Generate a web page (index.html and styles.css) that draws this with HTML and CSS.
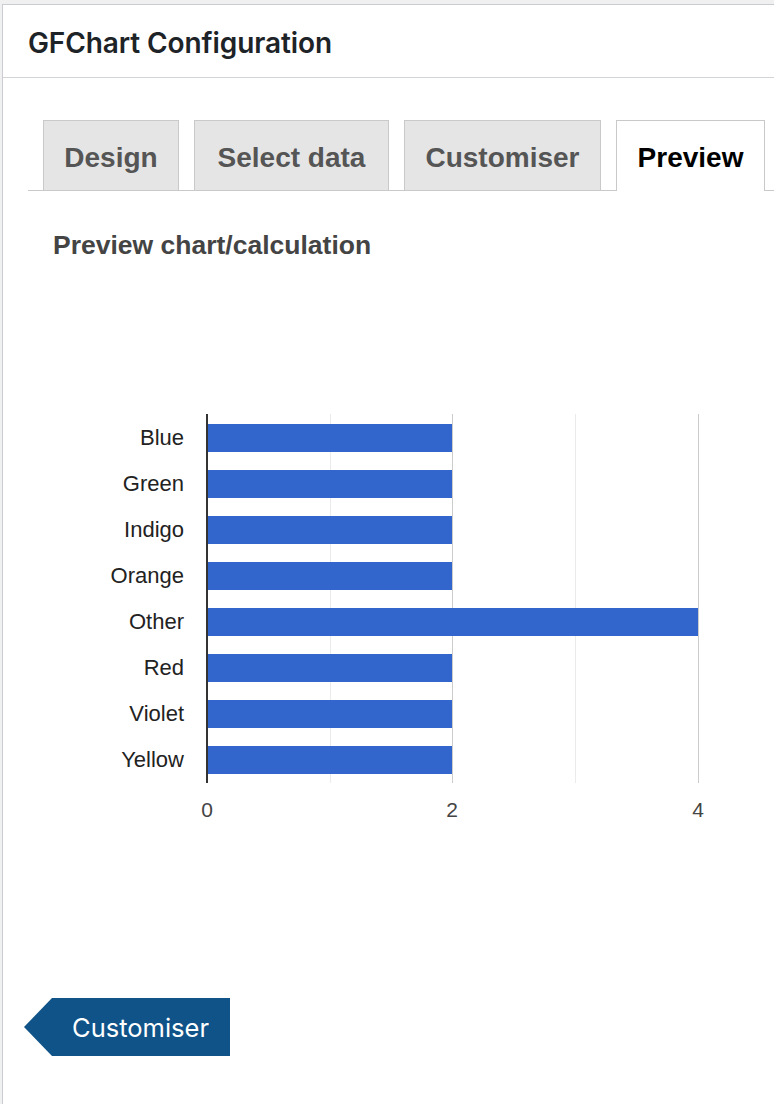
FILE: index.html
```html
<!DOCTYPE html>
<html lang="en">
<head>
<meta charset="utf-8">
<title>GFChart Configuration</title>
<link rel="stylesheet" href="styles.css">
</head>
<body>
<div class="panel">
  <div class="panel-header">
    <h2 class="panel-title">GFChart Configuration</h2>
  </div>
  <div class="panel-body">
    <nav class="tabs">
      <a class="tab">Design</a>
      <a class="tab">Select data</a>
      <a class="tab">Customiser</a>
      <a class="tab tab-active">Preview</a>
    </nav>
    <h3 class="section-title">Preview chart/calculation</h3>

    <div class="chart">
      <div class="chart-row">
        <div class="labels">
          <div class="label">Blue</div>
          <div class="label">Green</div>
          <div class="label">Indigo</div>
          <div class="label">Orange</div>
          <div class="label">Other</div>
          <div class="label">Red</div>
          <div class="label">Violet</div>
          <div class="label">Yellow</div>
        </div>
        <div class="plot">
          <div class="grid grid-minor" style="left:122px"></div>
          <div class="grid grid-major" style="left:244px"></div>
          <div class="grid grid-minor" style="left:367px"></div>
          <div class="grid grid-major" style="left:490px"></div>
          <div class="bar-row"><div class="bar" style="width:244px"></div></div>
          <div class="bar-row"><div class="bar" style="width:244px"></div></div>
          <div class="bar-row"><div class="bar" style="width:244px"></div></div>
          <div class="bar-row"><div class="bar" style="width:244px"></div></div>
          <div class="bar-row"><div class="bar" style="width:490px"></div></div>
          <div class="bar-row"><div class="bar" style="width:244px"></div></div>
          <div class="bar-row"><div class="bar" style="width:244px"></div></div>
          <div class="bar-row"><div class="bar" style="width:244px"></div></div>
        </div>
      </div>
      <div class="ticks">
        <span class="tick">0</span>
        <span class="tick">2</span>
        <span class="tick">4</span>
      </div>
    </div>

    <div class="actions">
      <button class="btn-back">Customiser</button>
    </div>
  </div>
</div>
</body>
</html>
```

FILE: styles.css
```css
html, body {
  margin: 0;
  padding: 0;
}
body {
  background: #f0f0f1;
  padding: 4px 0 0 2px;
  height: 1100px;
  overflow: hidden;
}
.panel {
  background: #fff;
  border-top: 1px solid #c9cdd1;
  border-left: 1px solid #c9cdd1;
  height: 1099px;
}
.panel-header {
  height: 72px;
  border-bottom: 1px solid #d2d5d8;
  display: flex;
  align-items: center;
  padding-left: 25px;
}
.panel-title {
  margin: 0;
  font-family: Inter, "Liberation Sans", sans-serif;
  font-weight: 600;
  font-size: 28px;
  color: #1d2327;
  letter-spacing: -0.1px;
  position: relative;
  top: 2px;
}
.panel-body {
  padding: 42px 0 0 25px;
}
.tabs {
  display: flex;
  gap: 15px;
  padding-left: 15px;
  border-bottom: 1px solid #c9c9c9;
  height: 70px;
  align-items: flex-end;
}
.tab {
  box-sizing: border-box;
  height: 70px;
  display: flex;
  align-items: center;
  justify-content: center;
  background: #e5e5e5;
  border: 1px solid #c9c9c9;
  border-bottom: none;
  font-family: "Liberation Sans", Arial, sans-serif;
  font-weight: bold;
  font-size: 28px;
  color: #555;
  padding: 4px 0 0;
}
.tab:nth-child(1) { width: 136px; }
.tab:nth-child(2) { width: 195px; }
.tab:nth-child(3) { width: 197px; }
.tab-active {
  width: 149px;
  background: #fff;
  color: #000;
  height: 71px;
  margin-bottom: -1px;
}
.section-title {
  margin: 38px 0 0 25px;
  font-family: "Liberation Sans", Arial, sans-serif;
  font-weight: bold;
  font-size: 26.5px;
  color: #444;
  line-height: 32px;
}
.chart {
  margin-top: 153px;
  font-family: "Liberation Sans", Arial, sans-serif;
}
.chart-row {
  display: flex;
}
.labels {
  width: 178px;
  padding-top: 1px;
}
.label {
  height: 46px;
  display: flex;
  align-items: center;
  justify-content: flex-end;
  font-size: 22px;
  color: #222;
  padding-right: 22px;
}
.plot {
  position: relative;
  width: 494px;
  height: 369px;
  padding-top: 1px;
  box-sizing: border-box;
  border-left: 2px solid #333;
}
.grid {
  position: absolute;
  top: 0;
  bottom: 0;
  width: 1px;
}
.grid-minor { background: #ebebeb; }
.grid-major { background: #cccccc; }
.bar-row {
  height: 46px;
  display: flex;
  align-items: center;
  position: relative;
}
.bar {
  height: 28px;
  background: #3366cc;
}
.ticks {
  position: relative;
  height: 50px;
  margin-left: 178px;
}
.tick {
  position: absolute;
  top: 15px;
  width: 60px;
  margin-left: -30px;
  text-align: center;
  font-size: 21px;
  color: #444;
}
.tick:nth-child(1) { left: 1px; }
.tick:nth-child(2) { left: 246px; }
.tick:nth-child(3) { left: 492px; }
.actions {
  margin-top: 165px;
  margin-left: -4px;
}
.btn-back {
  display: flex;
  align-items: center;
  height: 58px;
  width: 206px;
  border: none;
  background: #0f5388;
  color: #fff;
  font-family: Inter, "Liberation Sans", sans-serif;
  font-size: 25.5px;
  padding: 0 0 0 48px;
  clip-path: polygon(28px 0, 100% 0, 100% 100%, 28px 100%, 0 50%);
  cursor: pointer;
}
```
